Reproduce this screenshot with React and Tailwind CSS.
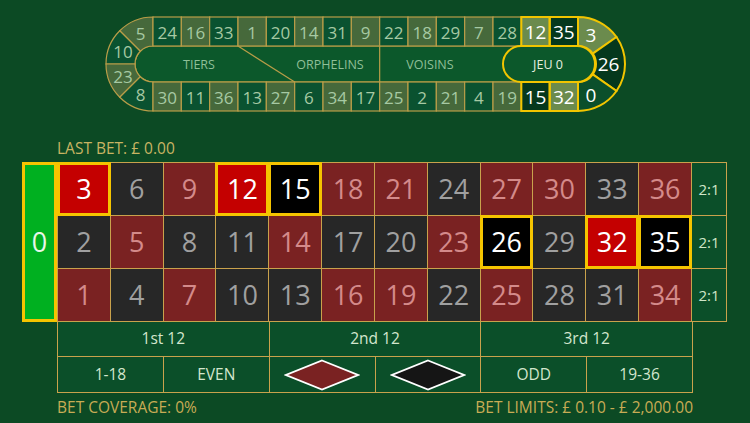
import React from 'react'

const REDS = new Set([1, 3, 5, 7, 9, 12, 14, 16, 18, 19, 21, 23, 25, 27, 30, 32, 34, 36])
const HOT = new Set([0, 3, 12, 15, 26, 32, 35])

const TRACK_TOP = [24, 16, 33, 1, 20, 14, 31, 9, 22, 18, 29, 7, 28, 12, 35]
const TRACK_BOTTOM = [30, 11, 36, 13, 27, 6, 34, 17, 25, 2, 21, 4, 19, 15, 32]

const GOLD = '#b99d48'
const YELLOW = '#f2c500'

function trackFill(n) {
  if (n === 0) return '#0b4f2b'
  if (REDS.has(n)) return HOT.has(n) ? '#6b8b4d' : '#46693b'
  return HOT.has(n) ? '#05381d' : '#0a5230'
}

// point on a ring, angle in degrees (math orientation)
function pt(cx, cy, r, a) {
  const t = (a * Math.PI) / 180
  return [cx + r * Math.cos(t), cy - r * Math.sin(t)]
}

function ringSeg(cx, cy, R, r, a1, a2) {
  const [x1, y1] = pt(cx, cy, R, a1)
  const [x2, y2] = pt(cx, cy, R, a2)
  const [x3, y3] = pt(cx, cy, r, a2)
  const [x4, y4] = pt(cx, cy, r, a1)
  const ccw = a2 > a1
  return `M${x1},${y1} A${R},${R} 0 0 ${ccw ? 0 : 1} ${x2},${y2} L${x3},${y3} A${r},${r} 0 0 ${ccw ? 1 : 0} ${x4},${y4} Z`
}

function Racetrack() {
  const x0 = 153
  const w = 425 / 15
  const cy = 64
  const R = 47
  const r = 18
  const left = [
    { n: 5, a1: 90, a2: 135 },
    { n: 10, a1: 135, a2: 180 },
    { n: 23, a1: 180, a2: 225 },
    { n: 8, a1: 225, a2: 270 },
  ]
  const right = [
    { n: 3, a1: 90, a2: 35 },
    { n: 26, a1: 35, a2: -35 },
    { n: 0, a1: -35, a2: -90 },
  ]
  const numText = (n, x, y) => (
    <text
      x={x}
      y={y}
      textAnchor="middle"
      dominantBaseline="central"
      fontSize={HOT.has(n) ? 19 : 17}
      fill={HOT.has(n) ? '#ffffff' : '#a6c9a3'}
    >
      {n}
    </text>
  )

  return (
    <svg width="750" height="138" viewBox="0 0 750 138" className="block font-['Open_Sans','Noto_Sans',sans-serif]">
      {/* inner band */}
      <path d={`M${x0},46 H578 V82 H${x0} A18,18 0 0 1 ${x0},46 Z`} fill="#0c582b" stroke={GOLD} strokeWidth="1.2" />
      <line x1={x0 + 3 * w} y1="46" x2={x0 + 5 * w} y2="82" stroke={GOLD} strokeWidth="1.2" />
      <line x1={x0 + 8 * w} y1="46" x2={x0 + 8 * w} y2="82" stroke={GOLD} strokeWidth="1.2" />

      {/* left cap */}
      {left.map((s) => {
        const [tx, ty] = pt(x0, cy, (R + r) / 2, (s.a1 + s.a2) / 2)
        return (
          <g key={'l' + s.n}>
            <path d={ringSeg(x0, cy, R, r, s.a1, s.a2)} fill={trackFill(s.n)} stroke={GOLD} strokeWidth="1.2" />
            {numText(s.n, tx, ty)}
          </g>
        )
      })}

      {/* straight cells */}
      {TRACK_TOP.map((n, i) => (
        <g key={'t' + n}>
          <rect x={x0 + i * w} y="17" width={w} height="29" fill={trackFill(n)} stroke={GOLD} strokeWidth="1.2" />
          {numText(n, x0 + i * w + w / 2, 32)}
        </g>
      ))}
      {TRACK_BOTTOM.map((n, i) => (
        <g key={'b' + n}>
          <rect x={x0 + i * w} y="82" width={w} height="29" fill={trackFill(n)} stroke={GOLD} strokeWidth="1.2" />
          {numText(n, x0 + i * w + w / 2, 97)}
        </g>
      ))}

      {/* right cap */}
      {right.map((s) => {
        const [tx, ty] = pt(578, cy, (R + r) / 2, (s.a1 + s.a2) / 2)
        return (
          <g key={'r' + s.n}>
            <path d={ringSeg(578, cy, R, r, s.a1, s.a2)} fill={trackFill(s.n)} stroke={YELLOW} strokeWidth="2" />
            {numText(s.n, tx - 2, ty + (s.n === 0 ? 2 : 0))}
          </g>
        )
      })}

      {/* highlighted straight cells */}
      {[13, 14].map((i) => (
        <g key={'h' + i}>
          <rect x={x0 + i * w} y="17" width={w} height="29" fill="none" stroke={YELLOW} strokeWidth="2" />
          <rect x={x0 + i * w} y="82" width={w} height="29" fill="none" stroke={YELLOW} strokeWidth="2" />
        </g>
      ))}

      {/* jeu 0 pill */}
      <rect x="503" y="46" width="92" height="36" rx="18" fill="#0c582b" stroke={YELLOW} strokeWidth="2" />

      <g fontSize="12.5" textAnchor="middle" dominantBaseline="central" fill="#8fbf98">
        <text x="199" y="64">TIERS</text>
        <text x="330" y="64">ORPHELINS</text>
        <text x="430" y="64">VOISINS</text>
        <text x="548" y="64" fill="#e8f0e0">JEU 0</text>
      </g>
    </svg>
  )
}

function NumberCell({ n }) {
  const red = REDS.has(n)
  const hot = HOT.has(n)
  let cls = 'flex items-center justify-center text-[27px] '
  if (hot) {
    cls += red ? 'bg-[#c40000] text-white ' : 'bg-black text-white '
    cls += 'relative z-10 outline outline-[#f5c400] shadow-[inset_0_0_0_2px_#f5c400]'
  } else {
    cls += red ? 'bg-[#7a2222] text-[#d48a8a]' : 'bg-[#272727] text-[#a0a0a0]'
  }
  return <div className={cls}>{n}</div>
}

export default function App() {
  const rows = [0, 1, 2].map((r) => Array.from({ length: 12 }, (_, c) => 3 * c + 3 - r))

  return (
    <div className="w-[750px] h-[423px] overflow-hidden bg-[#0c4a24] font-['Open_Sans','Noto_Sans',sans-serif]">
      <Racetrack />

      <div className="h-[24px] pl-[57px] text-[15.5px] leading-[20px] text-[#c8b463]">LAST BET: £ 0.00</div>

      <div className="flex pl-[22px]">
        <div className="w-[35px] h-[160px] bg-[#00b020] border-[3px] border-[#f5c400] flex items-center justify-center text-[27px] text-[#e8f6e8]">
          0
        </div>

        <div className="w-[670px]">
          <div className="grid grid-cols-[repeat(12,minmax(0,1fr))_34px] grid-rows-3 gap-px p-px h-[160px] bg-[#c9a24c]">
            {rows.map((row, ri) => (
              <React.Fragment key={ri}>
                {row.map((n) => (
                  <NumberCell key={n} n={n} />
                ))}
                <div className="bg-[#0b4f29] flex items-center justify-center text-[15px] text-[#cfe6c8]">2:1</div>
              </React.Fragment>
            ))}
          </div>

          <div className="w-[636px] grid grid-cols-3 gap-px px-px pb-px bg-[#c9a24c] h-[35px]">
            {['1st 12', '2nd 12', '3rd 12'].map((t) => (
              <div key={t} className="bg-[#0b4f29] flex items-center justify-center text-[15.5px] text-[#d3e6cd]">
                {t}
              </div>
            ))}
          </div>

          <div className="w-[636px] grid grid-cols-6 gap-px px-px pb-px bg-[#c9a24c] h-[36px]">
            {['1-18', 'EVEN', 'RED', 'BLACK', 'ODD', '19-36'].map((t) => (
              <div key={t} className="bg-[#0b4f29] flex items-center justify-center text-[15.5px] text-[#d3e6cd]">
                {t === 'RED' || t === 'BLACK' ? (
                  <svg width="76" height="32" viewBox="0 0 76 32">
                    <polygon
                      points="38,1.5 74,16 38,30.5 2,16"
                      fill={t === 'RED' ? '#7a2222' : '#151515'}
                      stroke="#ffffff"
                      strokeWidth="1.8"
                    />
                  </svg>
                ) : (
                  t
                )}
              </div>
            ))}
          </div>
        </div>
      </div>

      <div className="w-[636px] ml-[57px] mt-[4px] flex justify-between text-[15.5px] leading-[20px] text-[#c8ac55]">
        <span>BET COVERAGE: 0%</span>
        <span>BET LIMITS: £ 0.10 - £ 2,000.00</span>
      </div>
    </div>
  )
}
